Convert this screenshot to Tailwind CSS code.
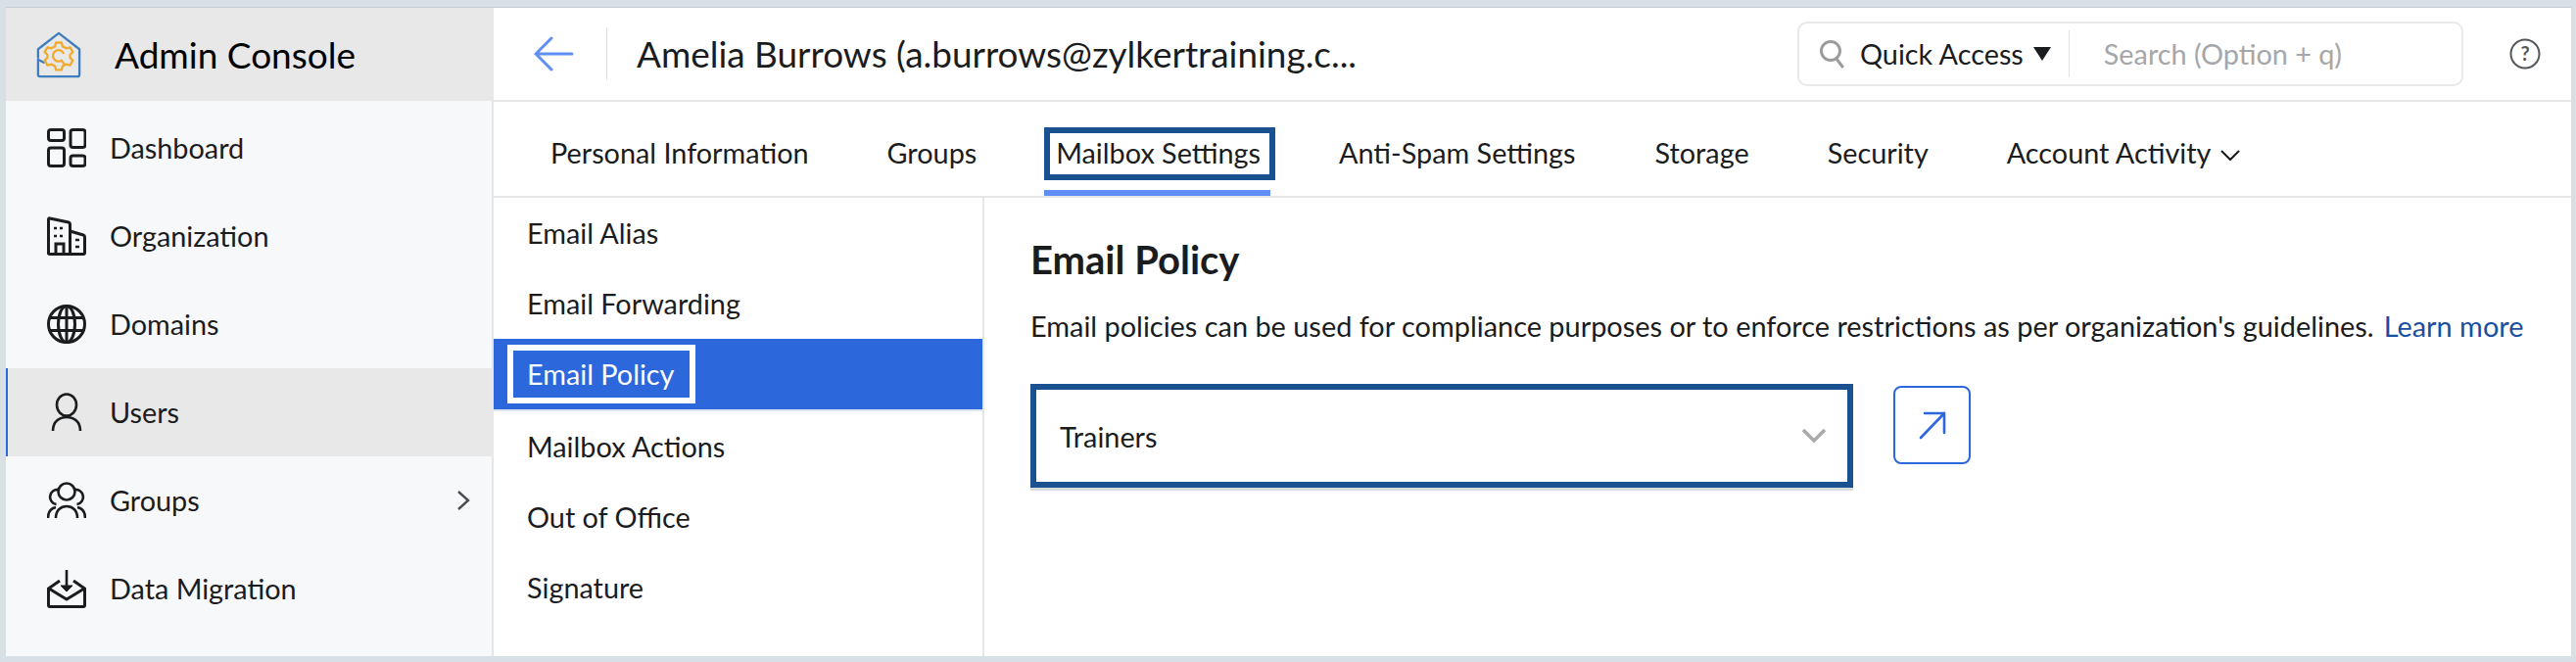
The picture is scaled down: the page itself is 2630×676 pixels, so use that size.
<!DOCTYPE html>
<html lang="en">
<head>
    <meta charset="UTF-8">
    <meta name="viewport" content="width=device-width, initial-scale=1.0">
    <title>Admin Console</title>
    <script src="https://cdn.jsdelivr.net/npm/@tailwindcss/browser@4"></script>
</head>
<body class="bg-[#d6e0e5] font-[family-name:Lato,sans-serif] text-[#1a1c1e] h-[676px] overflow-hidden">

<div class="h-full pt-[8px] pl-[6px] pr-[5px] pb-[6px]">
    <div class="flex h-full bg-white shadow-[0_-1px_0_#c5ced3]">

        <!-- Sidebar -->
        <aside class="w-[498px] shrink-0 flex flex-col bg-[#f7f8fa] border-r-2 border-[#e4e6e8]">
            <div class="h-[95px] -mr-[2px] mb-[3px] flex items-center pl-[30px] gap-[33px] bg-[#e8e8e8]">
                <svg class="w-[48px] h-[48px]" viewBox="0 0 50 50" fill="none">
                    <path d="M3 28 L3 19 L25 2 L47 19 L47 46 Q47 48 45 48 L5 48 Q3 48 3 46 L3 30 L9 33" stroke="#3f7ebd" stroke-width="2.4" stroke-linejoin="round" stroke-linecap="round"/>
                    <path d="M22 12 h6 l1 4 l4 2 l4 -1 l3 5 l-3 3 v3 l3 3 l-3 5 l-4 -1 l-4 2 l-1 4 h-6 l-1 -4 l-4 -2 l-4 1 l-3 -5 l3 -3 v-3 l-3 -3 l3 -5 l4 1 l4 -2 z" stroke="#f0ab2d" stroke-width="2.4" stroke-linejoin="round"/>
                    <path d="M30 23 a6 6 0 1 0 -2 8 l3 4" stroke="#f0ab2d" stroke-width="2.4" stroke-linecap="round"/>
                </svg>
                <span class="text-[37px] leading-none text-black">Admin Console</span>
            </div>

            <a class="h-[90px] flex items-center pl-[42px] gap-[24px] text-[28.8px]">
                <svg class="w-[40px] h-[40px]" viewBox="0 0 40 40" fill="none" stroke="#1a1c1e" stroke-width="3">
                    <rect x="1.5" y="1.5" width="16" height="11" rx="2.5"/>
                    <rect x="24" y="1.5" width="15" height="18" rx="2.5"/>
                    <rect x="1.5" y="20" width="16" height="18.5" rx="2.5"/>
                    <rect x="24" y="28" width="15" height="10.5" rx="2.5"/>
                </svg>
                <span class="pt-[2px]">Dashboard</span>
            </a>
            <a class="h-[90px] flex items-center pl-[42px] gap-[24px] text-[28.8px]">
                <svg class="w-[40px] h-[40px]" viewBox="0 0 40 40" fill="none" stroke="#1a1c1e" stroke-width="3">
                    <path d="M1.5 38.5 V3 Q1.5 1.5 3 2 L22 6 Q23.5 6.5 23.5 8 V38.5"/>
                    <path d="M23.5 15 L37 19 Q38.5 19.5 38.5 21 V37 Q38.5 38.5 37 38.5 H3 Q1.5 38.5 1.5 37"/>
                    <path d="M9 38 V28 H17 V38"/>
                    <path d="M7 12 h3 M13 12 h3 M7 20 h3 M13 20 h3 M29 24 h4 M29 31 h4" stroke-width="2.6"/>
                </svg>
                <span class="pt-[2px]">Organization</span>
            </a>
            <a class="h-[90px] flex items-center pl-[42px] gap-[24px] text-[28.8px]">
                <svg class="w-[40px] h-[40px]" viewBox="0 0 40 40" fill="none" stroke="#1a1c1e" stroke-width="3">
                    <circle cx="20" cy="20" r="18.5"/>
                    <ellipse cx="20" cy="20" rx="8.5" ry="18.5"/>
                    <path d="M20 1.5 V38.5 M3 13.5 H37 M3 26.5 H37"/>
                </svg>
                <span class="pt-[2px]">Domains</span>
            </a>
            <a class="h-[90px] flex items-center pl-[40px] gap-[24px] text-[28.8px] bg-[#e8e8e8] border-l-2 border-[#2d67dc] -mr-[2px]">
                <svg class="w-[40px] h-[40px]" viewBox="0 0 40 40" fill="none" stroke="#1a1c1e" stroke-width="2.6">
                    <ellipse cx="20" cy="12.5" rx="10" ry="11"/>
                    <path d="M6 39 C6 29 13 25 20 25 C27 25 34 29 34 39"/>
                </svg>
                <span class="pt-[2px]">Users</span>
            </a>
            <a class="h-[90px] flex items-center pl-[42px] pr-[22px] gap-[24px] text-[28.8px]">
                <svg class="w-[40px] h-[40px]" viewBox="0 0 40 40" fill="none" stroke="#1a1c1e" stroke-width="2.6">
                    <circle cx="20" cy="11" r="8.5"/>
                    <path d="M12 9 A7 7 0 1 0 9.5 24 M28 9 A7 7 0 1 1 30.5 24"/>
                    <path d="M9 38 C9 30 14 26 20 26 C26 26 31 30 31 38"/>
                    <path d="M1 38 C1 32 4 28 9 27 M39 38 C39 32 36 28 31 27"/>
                </svg>
                <span class="pt-[2px]">Groups</span>
                <svg class="ml-auto w-[14px] h-[22px]" viewBox="0 0 14 22" fill="none" stroke="#4a4d50" stroke-width="2.4"><path d="M2 2 L12 11 L2 20"/></svg>
            </a>
            <a class="h-[90px] flex items-center pl-[42px] gap-[24px] text-[28.8px]">
                <svg class="w-[40px] h-[40px]" viewBox="0 0 40 40" fill="none" stroke="#1a1c1e" stroke-width="3">
                    <path d="M13 12 L1.5 20 V37 Q1.5 38.5 3 38.5 H37 Q38.5 38.5 38.5 37 V20 L27 12"/>
                    <path d="M2 20 L20 31 L38 20"/>
                    <path d="M20 1 V19" stroke-width="2.6"/>
                    <path d="M14 17 H26 L20 23 Z" fill="#1a1c1e" stroke-width="1"/>
                </svg>
                <span class="pt-[2px]">Data Migration</span>
            </a>
        </aside>

        <!-- Main -->
        <main class="flex-1 min-w-0 flex flex-col">
            <header class="h-[96px] flex items-center border-b-2 border-[#e4e6e8] shrink-0">
                <svg class="ml-[41px] w-[41px] h-[36px]" viewBox="0 0 41 36" fill="none" stroke="#5f8ff5" stroke-width="3" stroke-linecap="round"><path d="M18 2 L2 18 L18 34 M2 18 H39"/></svg>
                <div class="ml-[33px] h-[54px] w-[1px] bg-[#dfe1e3]"></div>
                <h1 class="ml-[30px] text-[36.9px] leading-none font-normal">Amelia Burrows (a.burrows@zylkertraining.c...</h1>
                <div class="ml-auto w-[680px] h-[66px] flex items-center border-2 border-[#e6e8ea] rounded-[10px]">
                    <svg class="ml-[20px] w-[26px] h-[30px]" viewBox="0 0 26 30" fill="none" stroke="#9a9c9e" stroke-width="3"><circle cx="12" cy="12" r="9.5"/><path d="M18 20 L24 28" stroke-linecap="round"/></svg>
                    <span class="ml-[16px] text-[28.8px] leading-none">Quick Access</span>
                    <span class="ml-[10px] w-0 h-0 border-x-[9px] border-x-transparent border-t-[14px] border-t-[#1a1c1e]"></span>
                    <div class="ml-[18px] h-[48px] w-[1px] bg-[#e0e2e4]"></div>
                    <span class="ml-[35px] text-[28.8px] leading-none text-[#a5a7aa]">Search (Option + q)</span>
                </div>
                <svg class="ml-[47px] mr-[31px] w-[32px] h-[32px]" viewBox="0 0 32 32" fill="none" stroke="#55585b" stroke-width="2"><circle cx="16" cy="16" r="14.5"/><text x="16" y="23" text-anchor="middle" font-size="20" font-weight="700" font-family="Lato" fill="#55585b" stroke="none">?</text></svg>
            </header>

            <nav class="h-[98px] pt-[10px] flex items-center border-b-2 border-[#e4e6e8] pl-[58px] text-[28.8px] shrink-0">
                <span>Personal Information</span>
                <span class="ml-[80px]">Groups</span>
                <div class="relative ml-[69px] flex items-center">
                    <span class="border-[6px] border-[#1a5190] pl-[6px] pr-[9px] h-[54px] flex items-center">Mailbox Settings</span>
                    <span class="absolute left-0 right-[5px] -bottom-[16px] h-[6px] bg-[#5f8ff5]"></span>
                </div>
                <span class="ml-[65px]">Anti-Spam Settings</span>
                <span class="ml-[81px]">Storage</span>
                <span class="ml-[80px]">Security</span>
                <span class="ml-[80px]">Account Activity</span>
                <svg class="ml-[10px] mt-[4px] w-[20px] h-[12px]" viewBox="0 0 20 12" fill="none" stroke="#1a1c1e" stroke-width="2"><path d="M1 1 L10 10 L19 1"/></svg>
            </nav>

            <div class="flex flex-1 min-h-0">
                <div class="w-[501px] shrink-0 border-r-2 border-[#e4e6e8] text-[28.8px]">
                    <div class="h-[72px] pt-[2px] flex items-center pl-[34px]">Email Alias</div>
                    <div class="h-[72px] pt-[2px] flex items-center pl-[34px]">Email Forwarding</div>
                    <div class="h-[72px] mb-[2px] flex items-center pl-[14px] bg-[#2d67dc] text-white shadow-[0_2px_0_#dfe7f2]">
                        <span class="h-[60px] pt-[2px] flex items-center border-[6px] border-white pl-[14px] pr-[16px]">Email Policy</span>
                    </div>
                    <div class="h-[72px] pt-[2px] flex items-center pl-[34px]">Mailbox Actions</div>
                    <div class="h-[72px] pt-[2px] flex items-center pl-[34px]">Out of Office</div>
                    <div class="h-[72px] pt-[2px] flex items-center pl-[34px]">Signature</div>
                </div>

                <section class="flex-1 pl-[47px] pt-[40px]">
                    <h2 class="text-[40px] leading-[46px] font-bold">Email Policy</h2>
                    <p class="mt-[25px] text-[28.9px] leading-[40px]">Email policies can be used for compliance purposes or to enforce restrictions as per organization's guidelines.<a class="ml-[10px] text-[#1a4fa0]">Learn more</a></p>
                    <div class="mt-[39px] flex items-start gap-[41px]">
                        <div class="w-[840px] h-[106px] pt-[4px] flex items-center border-[6px] border-[#1a5190] pl-[24px] pr-[21px] text-[28.8px] shadow-[0_3px_0_#d9dbdd]">
                            Trainers
                            <svg class="ml-auto -mt-[4px] w-[26px] h-[16px]" viewBox="0 0 26 16" fill="none" stroke="#a8aaac" stroke-width="3.6"><path d="M2 2 L13 13 L24 2"/></svg>
                        </div>
                        <button class="mt-[2px] w-[79px] h-[80px] flex items-center justify-center border-2 border-[#2d67dc] rounded-[8px]">
                            <svg class="w-[30px] h-[30px]" viewBox="0 0 30 30" fill="none" stroke="#2d67dc" stroke-width="2.6" stroke-linecap="round"><path d="M3 28 L27 3 M7 3 H27 V23"/></svg>
                        </button>
                    </div>
                </section>
            </div>
        </main>
    </div>
</div>

</body>
</html>
